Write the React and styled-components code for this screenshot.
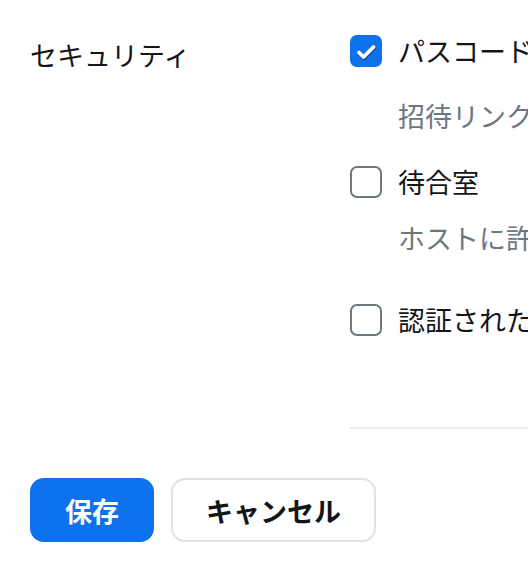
import React, { useState } from 'react'
import styled, { createGlobalStyle } from 'styled-components'

const GlobalStyle = createGlobalStyle`
    html, body {
        margin: 0;
        padding: 0;
        background: #ffffff;
        overflow: hidden;
    }
    body {
        font-family: "Noto Sans CJK JP", "Noto Sans", sans-serif;
        color: #131619;
    }
`;

const options = [
    {
        id: 'passcode',
        label: 'パスコード',
        desc: '招待リンクまたはミーティングIDを知っている参加者のみ',
        checked: true,
        descGap: 31,
        after: 32,
    },
    {
        id: 'waiting',
        label: '待合室',
        desc: 'ホストに許可された参加者のみがミーティングに参加できます',
        checked: false,
        descGap: 22,
        after: 48,
    },
    {
        id: 'auth',
        label: '認証されたユーザーのみがミーティングに参加できます',
        checked: false,
        after: 91,
    },
];

function CheckMark() {
    return (
        <svg width="32" height="32" viewBox="0 0 32 32" fill="none">
            <path d="M9.5 19 L14 23.5 L24 13.5" stroke="#0b4ea6" strokeWidth="3.8" strokeLinecap="round" strokeLinejoin="round" />
            <path d="M9 17.5 L13.5 22 L23.5 12" stroke="#ffffff" strokeWidth="3.8" strokeLinecap="round" strokeLinejoin="round" />
        </svg>
    )
}

function App() {
    const [state, setState] = useState(() =>
        Object.fromEntries(options.map(o => [o.id, o.checked]))
    );

    const toggle = (id) => setState(s => ({ ...s, [id]: !s[id] }));

    return (
        <>
        <GlobalStyle />
        <Page>
            <Section>
                <Label>セキュリティ</Label>
                <Options>
                    {options.map(o => (
                        <Option key={o.id} after={o.after}>
                            <Row onClick={() => toggle(o.id)}>
                                <Box checked={state[o.id]}>
                                    {state[o.id] && <CheckMark />}
                                </Box>
                                <RowText>{o.label}</RowText>
                            </Row>
                            {o.desc && <Desc gap={o.descGap}>{o.desc}</Desc>}
                        </Option>
                    ))}
                    <Divider />
                </Options>
            </Section>
            <Actions>
                <Button primary>保存</Button>
                <Button>キャンセル</Button>
            </Actions>
        </Page>
        </>
    )
}

export default App

const Page = styled.div`
    width: 528px;
    height: 566px;
    overflow: hidden;
    padding: 35px 0 0 30px;
    box-sizing: border-box;
`;

const Section = styled.div`
    display: flex;
    align-items: flex-start;
`;

const Label = styled.div`
    width: 320px;
    flex-shrink: 0;
    font-size: 27px;
    line-height: 36px;
    margin-top: 2px;
    white-space: nowrap;
`;

const Options = styled.div`
    display: flex;
    flex-direction: column;
    width: 600px;
    flex-shrink: 0;
`;

const Option = styled.div`
    display: flex;
    flex-direction: column;
    margin-bottom: ${({after}) => after}px;
`;

const Row = styled.div`
    display: flex;
    align-items: center;
    gap: 16px;
    height: 32px;
    cursor: pointer;
`;

const Box = styled.div`
    width: 32px;
    height: 32px;
    box-sizing: border-box;
    border-radius: 7px;
    flex-shrink: 0;
    background: ${({checked}) => checked ? '#0e72ed' : '#ffffff'};
    border: ${({checked}) => checked ? 'none' : '2px solid #6e7680'};
    display: flex;
    align-items: center;
    justify-content: center;
`;

const RowText = styled.span`
    font-size: 27px;
    line-height: 32px;
    white-space: nowrap;
    color: #131619;
`;

const Desc = styled.div`
    margin-top: ${({gap}) => gap}px;
    margin-left: 48px;
    font-size: 27px;
    line-height: 36px;
    color: #6e7680;
    white-space: nowrap;
`;

const Divider = styled.div`
    height: 2px;
    background: #ebebf0;
`;

const Actions = styled.div`
    display: flex;
    gap: 17px;
    margin-top: 49px;
`;

const Button = styled.button`
    height: 64px;
    padding: ${({primary}) => primary ? '0 35px' : '0 33px'};
    box-sizing: border-box;
    border-radius: 14px;
    font-family: "Noto Sans CJK JP", "Noto Sans", sans-serif;
    font-size: 27px;
    font-weight: 700;
    cursor: pointer;
    background: ${({primary}) => primary ? '#0e72ed' : '#ffffff'};
    color: ${({primary}) => primary ? '#ffffff' : '#131619'};
    border: ${({primary}) => primary ? 'none' : '2px solid #e0e2e6'};
`;
